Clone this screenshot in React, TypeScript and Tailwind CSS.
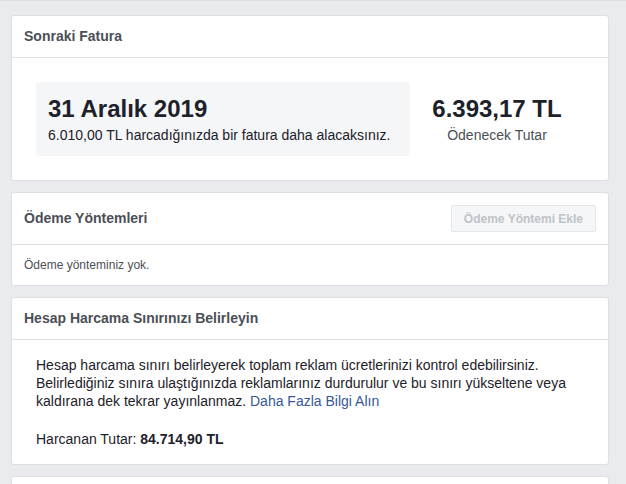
export default function App() {
  return (
    <div
      className="w-[626px] h-[484px] overflow-hidden bg-[#e9ebee] text-[#1d2129] border-t border-[#dddfe2]"
      style={{ fontFamily: '"Liberation Sans", Arial, sans-serif' }}
    >
      <div className="w-[598px] ml-[11px] pt-[14px] flex flex-col gap-[11px]">
        {/* next invoice */}
        <div className="bg-white border border-[#dddfe2] rounded-[3px]">
          <div className="h-[42px] px-[12px] flex items-center border-b border-[#dddfe2] text-[14px] font-bold text-[#4b4f56]">
            Sonraki Fatura
          </div>
          <div className="px-[24px] pt-[24px] pb-[24px] flex items-center">
            <div className="w-[374px] h-[74px] bg-[#f5f6f7] rounded-[3px] px-[12px] flex flex-col justify-center">
              <div className="text-[24px] font-bold leading-[28px]">31 Aralık 2019</div>
              <div className="mt-[3px] text-[14px] leading-[18px]">6.010,00 TL harcadığınızda bir fatura daha alacaksınız.</div>
            </div>
            <div className="flex-1 flex flex-col items-center">
              <div className="text-[24px] font-bold leading-[28px]">6.393,17 TL</div>
              <div className="mt-[3px] text-[14px] leading-[18px] text-[#4b4f56]">Ödenecek Tutar</div>
            </div>
          </div>
        </div>

        {/* payment methods */}
        <div className="bg-white border border-[#dddfe2] rounded-[3px]">
          <div className="h-[52px] pl-[12px] pr-[12px] flex items-center justify-between border-b border-[#dddfe2]">
            <span className="text-[14px] font-bold text-[#4b4f56]">Ödeme Yöntemleri</span>
            <button className="h-[27px] px-[12px] bg-[#f5f6f7] border border-[#e4e6eb] rounded-[2px] text-[12px] font-bold text-[#bec3c9]">
              Ödeme Yöntemi Ekle
            </button>
          </div>
          <div className="h-[40px] px-[12px] flex items-center text-[12px] text-[#4b4f56]">
            Ödeme yönteminiz yok.
          </div>
        </div>

        {/* spending limit */}
        <div className="bg-white border border-[#dddfe2] rounded-[3px]">
          <div className="h-[42px] px-[12px] flex items-center border-b border-[#dddfe2] text-[14px] font-bold text-[#4b4f56]">
            Hesap Harcama Sınırınızı Belirleyin
          </div>
          <div className="px-[24px] pt-[16px] pb-[16px] text-[14px] leading-[18px]">
            <p>
              Hesap harcama sınırı belirleyerek toplam reklam ücretlerinizi kontrol edebilirsiniz.
              Belirlediğiniz sınıra ulaştığınızda reklamlarınız durdurulur ve bu sınırı yükseltene veya
              kaldırana dek tekrar yayınlanmaz.{" "}
              <a className="text-[#365899]">Daha Fazla Bilgi Alın</a>
            </p>
            <p className="mt-[20px]">
              Harcanan Tutar: <span className="font-bold">84.714,90 TL</span>
            </p>
          </div>
        </div>

        <div className="bg-white border border-[#dddfe2] rounded-[3px] h-[40px]" />
      </div>
    </div>
  );
}
